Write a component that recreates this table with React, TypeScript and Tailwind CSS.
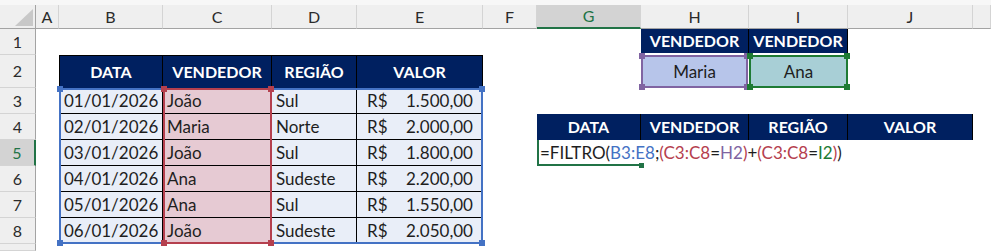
import type { ReactNode } from "react";

const colLetters = ["A", "B", "C", "D", "E", "F", "G", "H", "I", "J", ""];
const colStarts = [
  "col-start-2",
  "col-start-3",
  "col-start-4",
  "col-start-5",
  "col-start-6",
  "col-start-7",
  "col-start-8",
  "col-start-9",
  "col-start-10",
  "col-start-11",
  "col-start-12",
];
const rowStarts = [
  "row-start-3",
  "row-start-4",
  "row-start-5",
  "row-start-6",
  "row-start-7",
  "row-start-8",
  "row-start-9",
  "row-start-10",
  "row-start-11",
];

const sales = [
  ["01/01/2026", "João", "Sul", "1.500,00"],
  ["02/01/2026", "Maria", "Norte", "2.000,00"],
  ["03/01/2026", "João", "Sul", "1.800,00"],
  ["04/01/2026", "Ana", "Sudeste", "2.200,00"],
  ["05/01/2026", "Ana", "Sul", "1.550,00"],
  ["06/01/2026", "João", "Sudeste", "2.050,00"],
];
const dataRows = ["row-start-5", "row-start-6", "row-start-7", "row-start-8", "row-start-9", "row-start-10"];

function Handles({ color }: { color: string }) {
  return (
    <>
      <span className={`absolute -left-[4px] -top-[4px] h-[6px] w-[6px] ${color}`} />
      <span className={`absolute -right-[4px] -top-[4px] h-[6px] w-[6px] ${color}`} />
      <span className={`absolute -bottom-[4px] -left-[4px] h-[6px] w-[6px] ${color}`} />
      <span className={`absolute -bottom-[4px] -right-[4px] h-[6px] w-[6px] ${color}`} />
    </>
  );
}

function Head({ className, children }: { className: string; children: ReactNode }) {
  return (
    <div className={`flex items-center justify-center border-r border-black bg-[#002060] text-[16px] font-bold text-white ${className}`}>
      {children}
    </div>
  );
}

export default function App() {
  return (
    <div className="h-[251px] w-[991px] overflow-hidden bg-white font-[Lato,'Liberation_Sans',sans-serif] text-[#1e1e1e]">
      <div className="grid h-full grid-cols-[36px_23px_104px_109px_85px_126px_54px_104px_108px_99px_125px_1fr] grid-rows-[5px_24px_26px_33px_26px_26px_26px_26px_26px_26px_1fr]">
        {/* top strip */}
        <div className="col-span-12 row-start-1 bg-[#f7f7f7]" />

        {/* select-all corner */}
        <div className="col-start-1 row-start-2 flex items-end justify-end border-b border-r border-[#a3a3a3] bg-[#efefef] pb-[2px] pr-[2px]">
          <svg width="18" height="17" viewBox="0 0 18 17">
            <polygon points="0,17 18,17 18,0" fill="#c8c8c8" />
          </svg>
        </div>

        {/* column headers */}
        {colLetters.map((letter, i) => (
          <div
            key={i}
            className={`row-start-2 ${colStarts[i]} flex items-center justify-center border-r border-r-[#d4d4d4] text-[16px] ${
              letter === "G"
                ? "border-b-2 border-b-[#217346] bg-[#d3d3d3] text-[#217346]"
                : "border-b border-b-[#a3a3a3] bg-[#efefef] text-[#2b2b2b]"
            }`}
          >
            {letter}
          </div>
        ))}

        {/* row headers */}
        {rowStarts.map((rs, i) => (
          <div
            key={rs}
            className={`col-start-1 ${rs} flex items-center justify-center overflow-hidden border-b border-b-[#d4d4d4] text-[16px] ${
              i === 4
                ? "border-r-2 border-r-[#217346] bg-[#d3d3d3] text-[#217346]"
                : "border-r border-r-[#a3a3a3] bg-[#efefef] text-[#2b2b2b]"
            }`}
          >
            {i < 8 ? i + 1 : ""}
          </div>
        ))}

        {/* main table header */}
        <Head className="col-start-3 row-start-4 border-l border-t">DATA</Head>
        <Head className="col-start-4 row-start-4 border-t">VENDEDOR</Head>
        <Head className="col-start-5 row-start-4 border-t">REGIÃO</Head>
        <Head className="col-start-6 row-start-4 border-t">VALOR</Head>

        {/* main table body */}
        {sales.map((row, i) => (
          <div key={row[0]} className="contents">
            <div className={`col-start-3 ${dataRows[i]} flex items-center border-b border-r border-black bg-[#e9eef8] pl-[5px] text-[17px]`}>
              {row[0]}
            </div>
            <div className={`col-start-4 ${dataRows[i]} flex items-center border-b border-r border-black bg-[#e6cad3] pl-[4px] text-[17px]`}>
              {row[1]}
            </div>
            <div className={`col-start-5 ${dataRows[i]} flex items-center border-b border-r border-black bg-[#e9eef8] pl-[4px] text-[17px]`}>
              {row[2]}
            </div>
            <div className={`col-start-6 ${dataRows[i]} flex items-center justify-between border-b border-black bg-[#e9eef8] pl-[10px] pr-[10px] text-[17px]`}>
              <span>R$</span>
              <span>{row[3]}</span>
            </div>
          </div>
        ))}

        {/* reference range highlights */}
        <div className="pointer-events-none relative col-start-3 col-end-7 row-start-5 row-end-11 border-2 border-[#4472c4]">
          <Handles color="bg-[#4472c4]" />
        </div>
        <div className="pointer-events-none relative col-start-4 row-start-5 row-end-11 border-2 border-[#b5404e]">
          <Handles color="bg-[#b5404e]" />
        </div>

        {/* criteria */}
        <Head className="col-start-9 row-start-3 mb-[2px]">VENDEDOR</Head>
        <Head className="col-start-10 row-start-3 mb-[2px]">VENDEDOR</Head>
        <div className="relative col-start-9 row-start-4 mr-[1px] flex items-center justify-center border-2 border-[#8064a2] bg-[#b7c5ea] text-[17px]">
          Maria
          <Handles color="bg-[#8064a2]" />
        </div>
        <div className="relative col-start-10 row-start-4 flex items-center justify-center border-2 border-[#1e7b34] bg-[#a8cfd6] text-[17px]">
          Ana
          <Handles color="bg-[#1e7b34]" />
        </div>

        {/* result header */}
        <Head className="col-start-8 row-start-6">DATA</Head>
        <Head className="col-start-9 row-start-6">VENDEDOR</Head>
        <Head className="col-start-10 row-start-6">REGIÃO</Head>
        <Head className="col-start-11 row-start-6">VALOR</Head>

        {/* active cell G5 in edit mode */}
        <div className="relative col-start-8 row-start-7 border-b-2 border-l-2 border-[#217346]">
          <span className="absolute -bottom-[4px] -right-[3px] h-[5px] w-[5px] bg-[#217346]" />
        </div>
        <div className="col-start-8 col-end-12 row-start-7 flex items-center whitespace-nowrap pl-[3px] text-[17px]">
          <span>=FILTRO(</span>
          <span className="text-[#4472c4]">B3:E8</span>
          <span>;</span>
          <span className="text-[#b5404e]">(C3:C8</span>
          <span>=</span>
          <span className="text-[#8064a2]">H2</span>
          <span className="text-[#b5404e]">)</span>
          <span>+</span>
          <span className="text-[#b5404e]">(C3:C8</span>
          <span>=</span>
          <span className="text-[#1e7b34]">I2</span>
          <span className="text-[#b5404e]">)</span>
          <span>)</span>
        </div>
      </div>
    </div>
  );
}
